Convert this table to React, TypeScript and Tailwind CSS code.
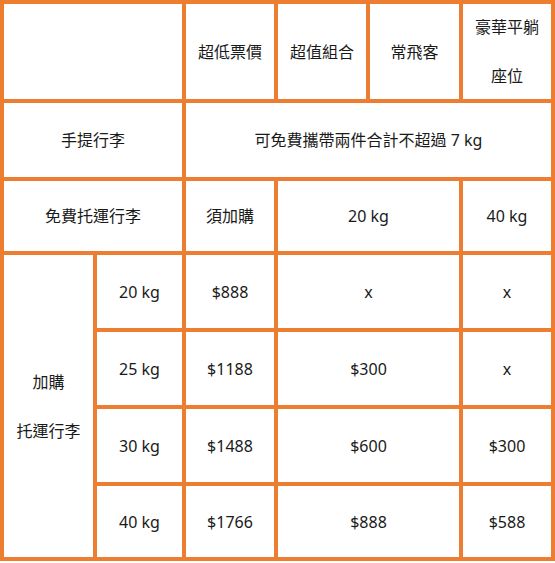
const cell = "bg-white flex items-center justify-center text-center";

const kgRows = [
  { kg: "20 kg", price: "$888", mid: "x", last: "x" },
  { kg: "25 kg", price: "$1188", mid: "$300", last: "x" },
  { kg: "30 kg", price: "$1488", mid: "$600", last: "$300" },
  { kg: "40 kg", price: "$1766", mid: "$888", last: "$588" },
];

export default function App() {
  return (
    <div className="min-h-screen bg-white">
      <div
        className="w-[555px] grid grid-cols-[89px_85px_88px_88px_89px_88px] grid-rows-[95px_74px_70px_73px_73px_73px_71px] gap-[4px] p-[4px] bg-[#ed7d31] text-[16px] text-[#1a1a1a]"
        style={{ fontFamily: '"Noto Sans", "Noto Sans CJK TC", sans-serif' }}
      >
        {/* header */}
        <div className={`${cell} col-span-2`} />
        <div className={cell}>超低票價</div>
        <div className={cell}>超值組合</div>
        <div className={cell}>常飛客</div>
        <div className={`${cell} flex-col gap-[29px] leading-[20px]`}>
          <span>豪華平躺</span>
          <span>座位</span>
        </div>

        {/* carry-on */}
        <div className={`${cell} col-span-2`}>手提行李</div>
        <div className={`${cell} col-span-4`}>可免費攜帶兩件合計不超過 7 kg</div>

        {/* free checked */}
        <div className={`${cell} col-span-2`}>免費托運行李</div>
        <div className={cell}>須加購</div>
        <div className={`${cell} col-span-2`}>20 kg</div>
        <div className={cell}>40 kg</div>

        {/* purchase */}
        <div className={`${cell} row-span-4 flex-col gap-[29px] leading-[20px]`}>
          <span>加購</span>
          <span>托運行李</span>
        </div>
        {kgRows.map((r) => (
          <div key={r.kg} className="contents">
            <div className={cell}>{r.kg}</div>
            <div className={cell}>{r.price}</div>
            <div className={`${cell} col-span-2`}>{r.mid}</div>
            <div className={cell}>{r.last}</div>
          </div>
        ))}
      </div>
    </div>
  );
}
